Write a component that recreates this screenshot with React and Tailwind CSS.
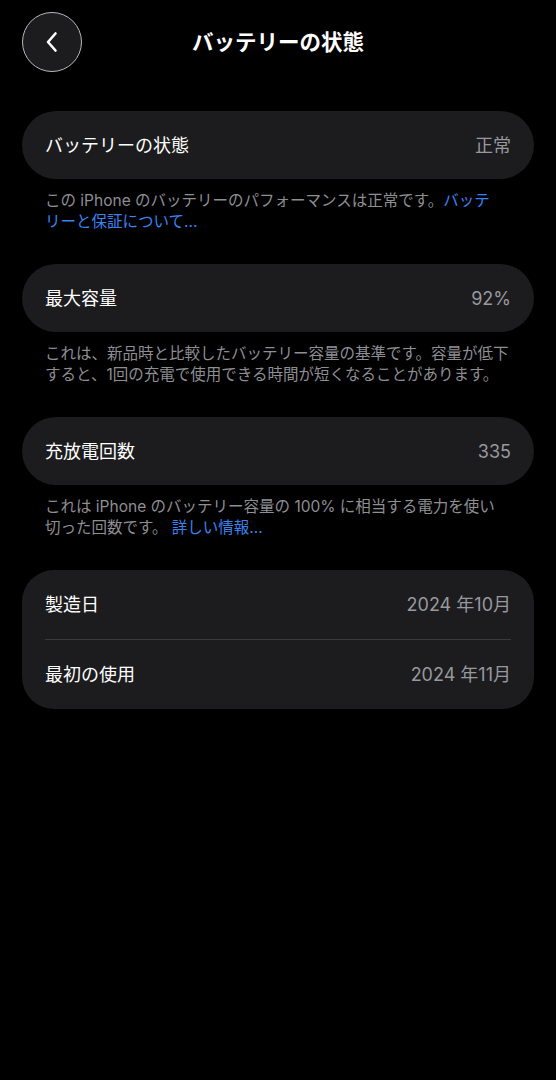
import React from 'react'

const font = { fontFamily: 'Inter, "Noto Sans CJK JP", sans-serif' }

// one rounded row: label on the left, grey value on the right
const Row = ({ label, value, tall }) => (
    <div className={`${tall ? 'h-[69px]' : 'h-[68px]'} flex items-center justify-between px-[23px]`}>
        <p className="text-[18px] text-white">{label}</p>
        <p className="text-[18px] text-[#98989e]">{value}</p>
    </div>
)

const Note = ({ children }) => (
    <div className="px-[45px] pt-[11px] pb-[32px] text-[15.5px] leading-[21px] text-[#8e8e93] whitespace-nowrap">
        {children}
    </div>
)

const BackButton = () => (
    <button className="w-[60px] h-[60px] rounded-full border border-[#b8b8bc] bg-[#1c1c1e] flex items-center justify-center">
        <svg width="14" height="22" viewBox="0 0 14 22" fill="none">
            <path d="M10.5 2.5 L3 11 L10.5 19.5" stroke="white" strokeWidth="2.6" strokeLinecap="round" strokeLinejoin="round" />
        </svg>
    </button>
)

const App = () => {
  return (
    <div className="min-h-screen w-[556px] bg-black" style={font}>
        {/* header */}
        <div className="grid grid-cols-[60px_1fr_60px] items-center px-[22px] pt-[12px]">
            <BackButton />
            <h1 className="text-center text-[21.5px] font-bold text-white">バッテリーの状態</h1>
            <div />
        </div>

        <div className="pt-[39px]">
            <div className="mx-[22px] rounded-full bg-[#1c1c1e]">
                <Row label="バッテリーの状態" value="正常" />
            </div>
            <Note>
                この iPhone のバッテリーのパフォーマンスは正常です。<span className="text-[#3a82f0]">バッテ</span>
                <br />
                <span className="text-[#3a82f0]">リーと保証について...</span>
            </Note>

            <div className="mx-[22px] rounded-full bg-[#1c1c1e]">
                <Row label="最大容量" value="92%" />
            </div>
            <Note>
                これは、新品時と比較したバッテリー容量の基準です。容量が低下
                <br />
                すると、1回の充電で使用できる時間が短くなることがあります。
            </Note>

            <div className="mx-[22px] rounded-full bg-[#1c1c1e]">
                <Row label="充放電回数" value="335" />
            </div>
            <Note>
                これは iPhone のバッテリー容量の 100% に相当する電力を使い
                <br />
                切った回数です。 <span className="text-[#3a82f0]">詳しい情報...</span>
            </Note>

            <div className="mx-[22px] rounded-[32px] bg-[#1c1c1e]">
                <Row label="製造日" value="2024 年10月" tall />
                <div className="mx-[23px] h-px bg-[#3a3a3c]" />
                <Row label="最初の使用" value="2024 年11月" tall />
            </div>
        </div>
    </div>
  )
}

export default App
